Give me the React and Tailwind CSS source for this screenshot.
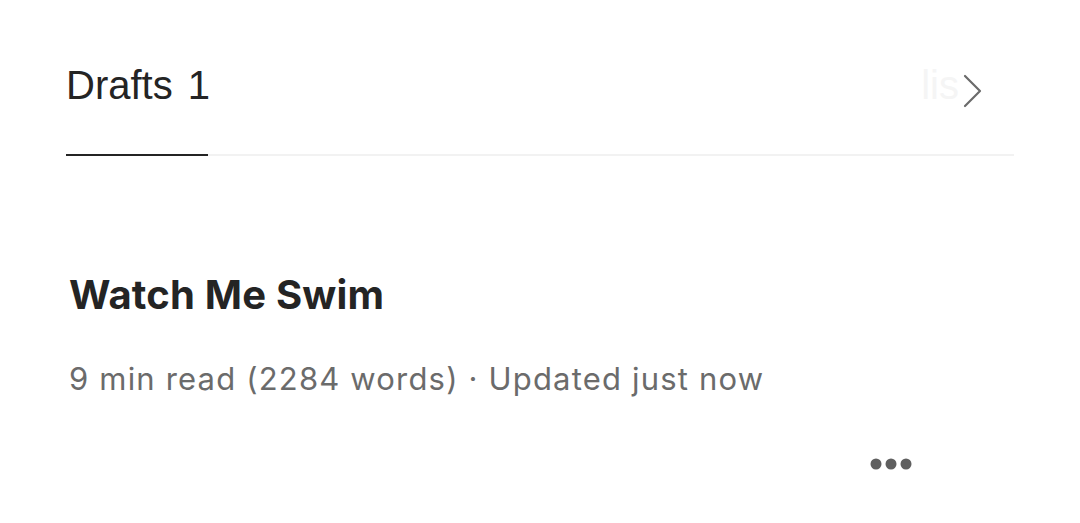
import React from "react";

const Chevron = () => (
  <svg width="22" height="36" viewBox="0 0 22 36" fill="none" className="text-[#6b6b6b]">
    <path d="M4 3 L19 18 L4 33" stroke="currentColor" strokeWidth="2.2" strokeLinecap="round" strokeLinejoin="round" />
  </svg>
);

const Dots = () => (
  <svg width="44" height="14" viewBox="0 0 44 14" className="text-[#5f5f5f]">
    <circle cx="7" cy="7" r="5.5" fill="currentColor" />
    <circle cx="22" cy="7" r="5.5" fill="currentColor" />
    <circle cx="37" cy="7" r="5.5" fill="currentColor" />
  </svg>
);

export default function App() {
  return (
    <div className="min-h-[523px] w-[1080px] bg-white">
      {/* Tabs */}
      <div className="mx-[66px] pt-[59px]">
        <div className="flex items-start justify-between border-b-2 border-[#f2f2f2]">
          <div className="flex flex-col">
            <div className="flex items-baseline pb-[43px] font-['Liberation_Sans',Arial,sans-serif] text-[40px] leading-[52px] text-[#242424]">
              <span>Drafts</span>
              <span className="ml-[15px]">1</span>
            </div>
            <div className="-mb-[2px] h-[2px] w-[142px] bg-[#242424]" />
          </div>
          <div className="mr-[31px] flex items-center">
            <span className="font-['Liberation_Sans',Arial,sans-serif] text-[40px] leading-[52px] text-[#f5f5f5]">lis</span>
            <div className="mt-[12px] ml-[2px]">
              <Chevron />
            </div>
          </div>
        </div>
      </div>

      {/* Draft item */}
      <div className="mx-[66px] pt-[114px] pl-[3px]">
        <h2 className="font-['Inter',sans-serif] text-[40px] font-bold leading-[50px] tracking-[0.005em] text-[#242424]">
          Watch Me Swim
        </h2>
        <p className="mt-[39px] font-['Inter',sans-serif] text-[31px] leading-[40px] tracking-[0.038em] text-[#6b6b6b]">
          9 min read (2284 words) · Updated just now
        </p>
        <div className="mt-[58px] flex justify-end pr-[101px]">
          <Dots />
        </div>
      </div>
    </div>
  );
}
